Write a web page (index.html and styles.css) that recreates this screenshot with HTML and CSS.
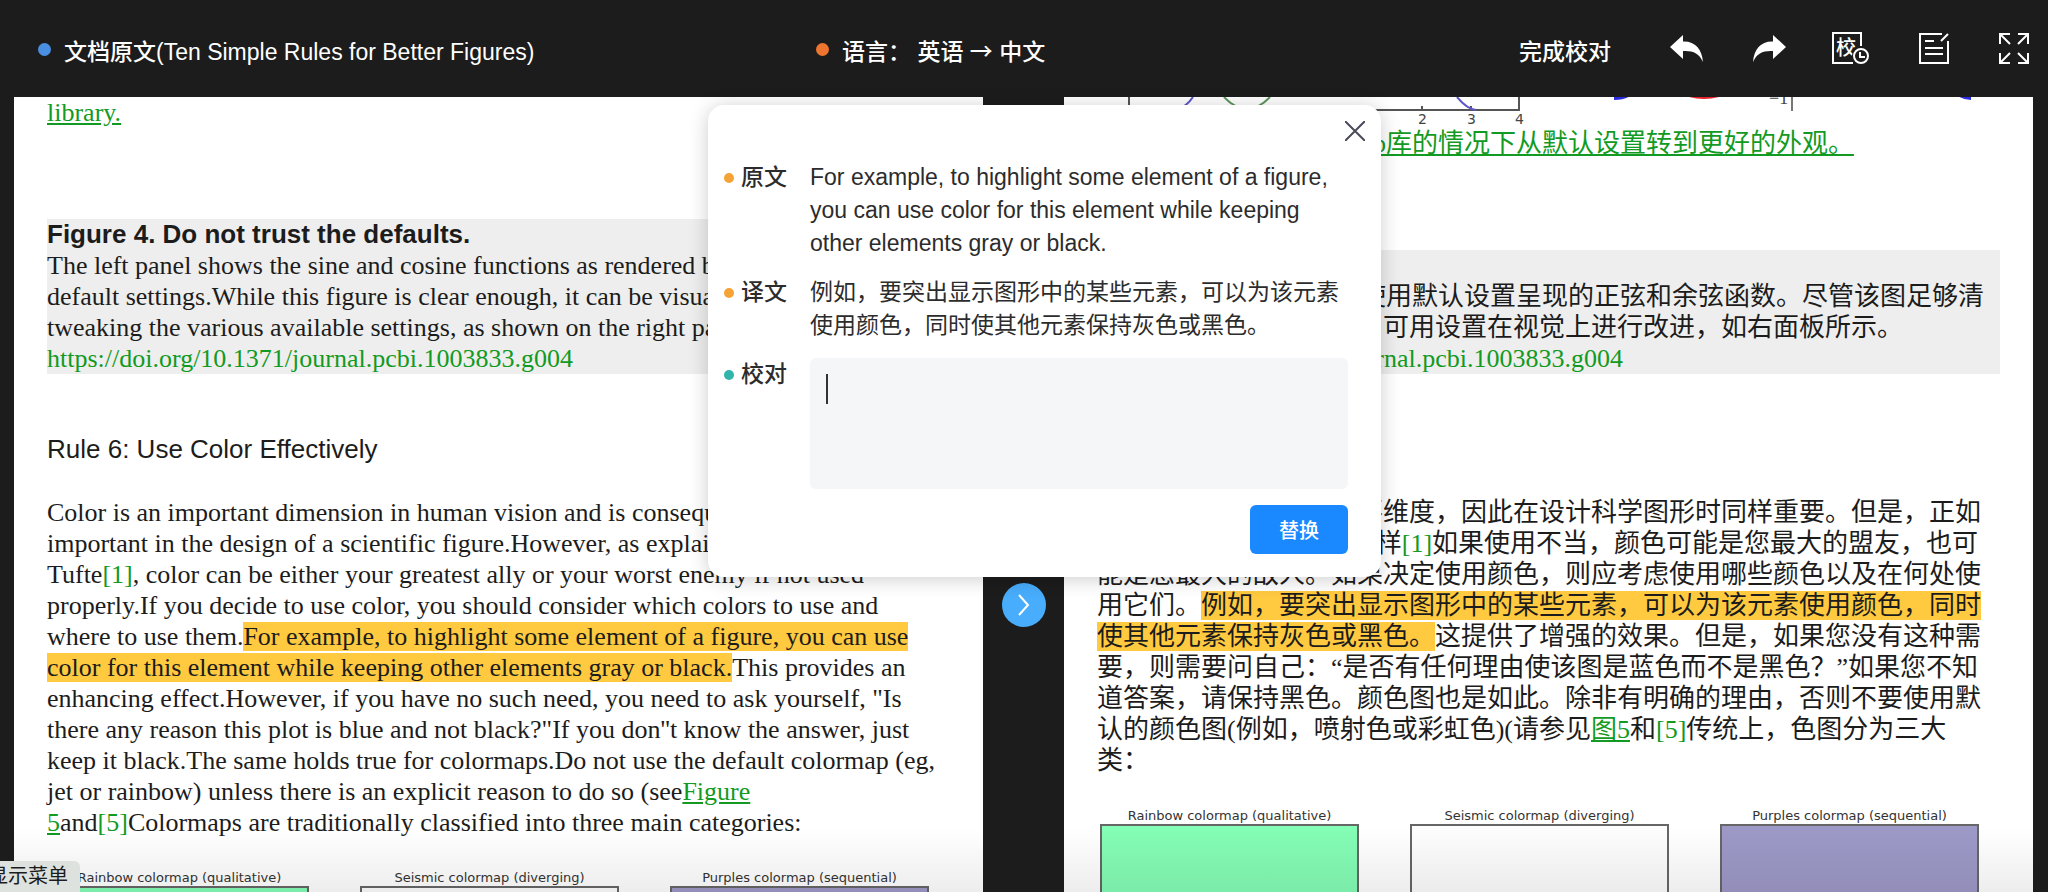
FILE: index.html
```html
<!DOCTYPE html>
<html lang="zh-CN">
<head>
    <meta charset="UTF-8">
    <meta name="viewport" content="width=device-width, initial-scale=1.0">
    <title>文档校对</title>
    <link rel="stylesheet" href="styles.css">
</head>
<body>
    <header class="topbar">
        <div class="topbar-item"><span class="dot blue"></span>文档原文(Ten Simple Rules for Better Figures)</div>
        <div class="topbar-item"><span class="dot orange"></span><span>语言： 英语 <span class="arrow">→</span> 中文</span></div>
        <div class="tools">
            <button class="finish">完成校对</button>
            <button class="tool" aria-label="撤销">
                <svg width="38" height="38" viewBox="0 0 38 38"><path fill="#fff" d="M3 16 L16 4 V10.500 C28 10 35 18 36 31 C32 22 26 19.500 16 20 V28 Z"/></svg>
            </button>
            <button class="tool" aria-label="重做">
                <svg width="38" height="38" viewBox="0 0 38 38"><path fill="#fff" d="M37 16 L24 4 V10.500 C12 10 5 18 4 31 C8 22 14 19.500 24 20 V28 Z"/></svg>
            </button>
            <button class="tool" aria-label="校对记录">
                <svg width="38" height="38" viewBox="0 0 38 38" fill="none" stroke="#fff" stroke-width="2">
                    <path d="M30 15 V2 H2 V32 H22"/>
                    <text class="tool-text" x="5" y="24">校</text>
                    <circle cx="30" cy="25" r="9" fill="#1c1c1c" stroke="none"/>
                    <circle cx="30" cy="25" r="7"/>
                    <path d="M29 21 V26 H34"/>
                </svg>
            </button>
            <button class="tool" aria-label="笔记">
                <svg width="38" height="38" viewBox="0 0 38 38" fill="none" stroke="#fff" stroke-width="2">
                    <path d="M29 3 H7 V32 H35 V10 M28 10 L35 3 M12 10 H21 M12 17 H30 M12 23 H30"/>
                </svg>
            </button>
            <button class="tool" aria-label="全屏">
                <svg width="38" height="38" viewBox="0 0 38 38" fill="none" stroke="#fff" stroke-width="2">
                    <path d="M5 13 V3 H15 M5 3 L15 13 M23 3 H33 V13 M33 3 L23 13 M5 22 V32 H15 M5 32 L15 22 M23 32 H33 V22 M33 32 L23 22"/>
                </svg>
            </button>
        </div>
    </header>

    <main class="compare">
        <article class="page" lang="en">
            <p class="doc-text"><a href="#lib">library.</a></p>
            <div class="caption">
                <h3>Figure 4. Do not trust the defaults.</h3>
                <p class="doc-text">The left panel shows the sine and cosine functions as rendered by matplotlib using<br>
                default settings.While this figure is clear enough, it can be visually improved by<br>
                tweaking the various available settings, as shown on the right panel.<br>
                <a class="plain" href="#g004">https://doi.org/10.1371/journal.pcbi.1003833.g004</a></p>
            </div>
            <h2>Rule 6: Use Color Effectively</h2>
            <p class="doc-text">Color is an important dimension in human vision and is consequently equally<br>
            important in the design of a scientific figure.However, as explained by Edward<br>
            Tufte<a class="plain" href="#r1">[1]</a>, color can be either your greatest ally or your worst enemy if not used<br>
            properly.If you decide to use color, you should consider which colors to use and<br>
            where to use them.<mark>For example, to highlight some element of a figure, you can use<br>
            color for this element while keeping other elements gray or black.</mark>This provides an<br>
            enhancing effect.However, if you have no such need, you need to ask yourself, "Is<br>
            there any reason this plot is blue and not black?"If you don''t know the answer, just<br>
            keep it black.The same holds true for colormaps.Do not use the default colormap (eg,<br>
            jet or rainbow) unless there is an explicit reason to do so (see<a href="#f5">Figure<br>
            5</a>and<a class="plain" href="#r5">[5]</a>Colormaps are traditionally classified into three main categories:</p>
            <div class="maps">
                <figure><figcaption>Rainbow colormap (qualitative)</figcaption><div class="map rainbow"></div></figure>
                <figure><figcaption>Seismic colormap (diverging)</figcaption><div class="map seismic"></div></figure>
                <figure><figcaption>Purples colormap (sequential)</figcaption><div class="map purples"></div></figure>
            </div>
        </article>

        <div class="divider">
            <button class="next" aria-label="下一页">
                <svg width="44" height="44" viewBox="0 0 44 44" fill="none" stroke="#fff" stroke-width="2"><path d="M17 12 L26 22 L17 32"/></svg>
            </button>
        </div>

        <article class="page">
            <!-- bottom edge of the sine / cosine plots -->
            <svg class="plot" width="902" height="31" viewBox="0 0 902 31" fill="none">
                <path stroke="#555" stroke-width="2" d="M32 0 V13 H422 V0 M325 13 V9 M374 13 V9"/>
                <path stroke="#5b55c8" stroke-width="2" d="M96 0 Q90 9 80 13 M360 0 Q370 12 379 13"/>
                <path stroke="#5f955f" stroke-width="2" d="M127 0 Q150 24 173 0"/>
                <path stroke="#2a2ae0" stroke-width="4" d="M517 1 Q526 1 531 -2 M863 -2 Q868 1 874 1"/>
                <path fill="#e8202a" d="M592 0 H622 Q607 4 592 0"/>
                <path stroke="#777" stroke-width="2" d="M695 0 V14"/>
                <text class="tick" x="321" y="27">2</text>
                <text class="tick" x="370" y="27">3</text>
                <text class="tick" x="418" y="27">4</text>
                <text class="tick serif" x="672" y="7">−1</text>
            </svg>
            <p class="doc-text"><a href="#lib-zh">可以在不更改此matplotlib库的情况下从默认设置转到更好的外观。</a></p>
            <div class="caption">
                <p class="doc-text"><b>图4.不要相信默认值。</b><br>
                左面板显示由matplotlib使用默认设置呈现的正弦和余弦函数。尽管该图足够清<br>
                晰，但可以通过调整其中可用设置在视觉上进行改进，如右面板所示。<br>
                <a class="plain" href="#g004-zh">https://doi.org/10.1371/journal.pcbi.1003833.g004</a></p>
            </div>
            <h2>规则6：有效使用颜色</h2>
            <p class="doc-text">颜色是人类视觉中的重要维度，因此在设计科学图形时同样重要。但是，正如<br>
            Edward Tufte 所解释的那样<a class="plain" href="#r1-zh">[1]</a>如果使用不当，颜色可能是您最大的盟友，也可<br>
            能是您最大的敌人。如果决定使用颜色，则应考虑使用哪些颜色以及在何处使<br>
            用它们。<mark>例如，要突出显示图形中的某些元素，可以为该元素使用颜色，同时<br>
            使其他元素保持灰色或黑色。</mark>这提供了增强的效果。但是，如果您没有这种需<br>
            要，则需要问自己：“是否有任何理由使该图是蓝色而不是黑色？”如果您不知<br>
            道答案，请保持黑色。颜色图也是如此。除非有明确的理由，否则不要使用默<br>
            认的颜色图(例如，喷射色或彩虹色)(请参见<a href="#f5-zh">图5</a>和<a class="plain" href="#r5-zh">[5]</a>传统上，色图分为三大<br>
            类：</p>
            <div class="maps">
                <figure><figcaption>Rainbow colormap (qualitative)</figcaption><div class="map rainbow"></div></figure>
                <figure><figcaption>Seismic colormap (diverging)</figcaption><div class="map seismic"></div></figure>
                <figure><figcaption>Purples colormap (sequential)</figcaption><div class="map purples"></div></figure>
            </div>
        </article>
    </main>

    <form class="dialog" role="dialog" aria-label="校对">
        <button class="close" type="button" aria-label="关闭">
            <svg width="20" height="20" viewBox="0 0 20 20" stroke="#4a4a5a" stroke-width="2"><path d="M0 0 L20 20 M20 0 L0 20"/></svg>
        </button>
        <div class="row">
            <span class="label">原文</span>
            <p>For example, to highlight some element of a figure, you can use color for this element while keeping other elements gray or black.</p>
        </div>
        <div class="row">
            <span class="label">译文</span>
            <p>例如，要突出显示图形中的某些元素，可以为该元素使用颜色，同时使其他元素保持灰色或黑色。</p>
        </div>
        <div class="row">
            <label class="label teal" for="proof">校对</label>
            <textarea id="proof"></textarea>
        </div>
        <button class="replace" type="button">替换</button>
    </form>

    <div class="menu-tip">显示菜单</div>
</body>
</html>
```
FILE: styles.css
```css
* {
    box-sizing: border-box;
}

body {
    margin: 0;
    height: 100vh;
    display: flex;
    flex-direction: column;
    overflow: hidden;
    background-color: #1c1c1c;
    color: #1c1c1c;
    font-family: "Liberation Sans", "Noto Sans CJK SC", sans-serif;
    font-size: 23px;
}

h2, h3, p, figure {
    margin: 0;
}

button {
    border: none;
    padding: 0;
    background: none;
    color: white;
    font-family: inherit;
    font-size: 23px;
    cursor: pointer;
}

svg {
    display: block;
}

/* top bar */
.topbar {
    flex: none;
    height: 97px;
    padding: 2px 15px 0 38px;
    display: grid;
    grid-template-columns: 39% 1fr auto;
    align-items: center;
    color: white;
    white-space: nowrap;
}

.topbar-item {
    display: flex;
    align-items: center;
    gap: 13px;
    font-weight: 500;
}

.arrow {
    font-family: "Noto Sans CJK SC", sans-serif;
    line-height: 1;
}

.dot {
    width: 13px;
    height: 13px;
    border-radius: 50%;
}

.blue { background-color: #4a90e2; }
.orange { background-color: #ee7530; }

.tools {
    display: flex;
    align-items: center;
    gap: 44px;
}

.finish {
    margin-right: 12px;
    font-weight: 500;
}

.tool-text {
    font-size: 20px;
    font-weight: 500;
    fill: white;
    stroke: none;
}

/* the two documents */
.compare {
    flex: 1;
    min-height: 0;
    padding: 0 15px 0 14px;
    display: grid;
    grid-template-columns: 1fr 81px 1fr;
}

.page {
    position: relative;
    padding: 0 33px;
    overflow: hidden;
    background-color: white;
}

.page::after {
    content: "";
    position: absolute;
    left: 0;
    right: 0;
    bottom: 0;
    height: 64px;
    background: linear-gradient(rgba(0, 0, 0, 0), rgba(0, 0, 0, 0.07));
}

.doc-text {
    font-family: "Liberation Serif", "Noto Sans CJK SC", serif;
    font-size: 26px;
    line-height: 31px;
    white-space: nowrap;
}

.doc-text a {
    color: #129a22;
}

.doc-text a.plain {
    text-decoration: none;
}

.caption {
    margin-top: 91px;
    background-color: #eee;
}

h2, h3 {
    font-size: 26px;
    line-height: 31px;
}

h2 {
    margin: 60px 0 32px;
    font-weight: normal;
}

mark {
    background-color: #ffca40;
    color: inherit;
}

.tick {
    fill: #444;
    font-family: "DejaVu Sans", sans-serif;
    font-size: 14px;
}

.tick.serif {
    font-family: "Liberation Serif", serif;
    font-size: 18px;
}

.maps {
    display: flex;
    gap: 51px;
    margin: 32px 3px 0;
}

.maps figure {
    flex: none;
    width: 259px;
}

figcaption {
    font-family: "DejaVu Sans", sans-serif;
    font-size: 13px;
    line-height: 16px;
    color: #333;
    text-align: center;
}

.map {
    height: 200px;
    border: 2px solid #666;
}

.rainbow { background-color: #84fdb5; }
.seismic { background-color: #fefdfe; }
.purples { background-color: #9d99c7; }

.divider {
    display: flex;
    justify-content: center;
    align-items: flex-start;
    padding-top: 486px;
}

.next {
    width: 44px;
    height: 44px;
    border-radius: 50%;
    background-color: #48adfc;
}

/* proofreading dialog */
.dialog {
    position: absolute;
    top: 105px;
    left: 708px;
    width: 673px;
    padding: 56px 33px 23px 16px;
    display: flex;
    flex-direction: column;
    gap: 16px;
    border-radius: 16px;
    background-color: white;
    box-shadow: 0 2px 20px rgba(0, 0, 0, 0.2);
    color: #2c2c2c;
    line-height: 33px;
}

.close {
    position: absolute;
    top: 16px;
    right: 16px;
}

.row {
    display: grid;
    grid-template-columns: 86px 1fr;
}

.label {
    display: flex;
    align-items: center;
    gap: 7px;
    height: 33px;
    font-weight: 500;
}

.label::before {
    content: "";
    width: 10px;
    height: 10px;
    border-radius: 50%;
    background-color: #f5a336;
}

.label.teal::before {
    background-color: #2fb5ab;
}

textarea {
    height: 131px;
    padding: 16px;
    border: none;
    border-radius: 6px;
    outline: none;
    resize: none;
    /* caret */
    background: linear-gradient(#333, #333) 16px 16px / 2px 30px no-repeat #f5f6f8;
    font: inherit;
}

.replace {
    align-self: flex-end;
    width: 98px;
    height: 49px;
    border-radius: 6px;
    background-color: #1a88ff;
    font-size: 20px;
    font-weight: 500;
}

.menu-tip {
    position: absolute;
    left: -24px;
    bottom: 0;
    padding: 0 12px;
    border-radius: 0 6px 0 0;
    background-color: #dde2df;
    font-size: 20px;
    line-height: 31px;
}
```
